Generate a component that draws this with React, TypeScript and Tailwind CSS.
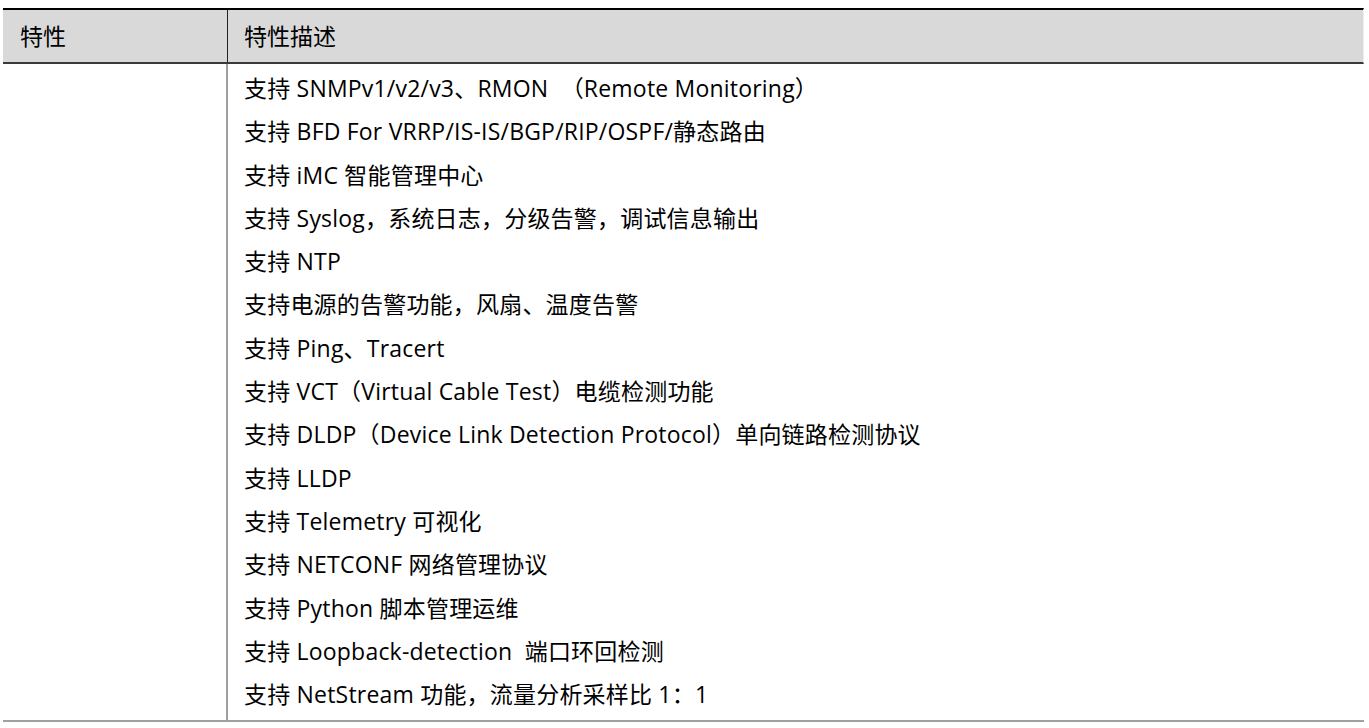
import React from "react";

const rows = [
  "支持 SNMPv1/v2/v3、RMON  （Remote Monitoring）",
  "支持 BFD For VRRP/IS-IS/BGP/RIP/OSPF/静态路由",
  "支持 iMC 智能管理中心",
  "支持 Syslog，系统日志，分级告警，调试信息输出",
  "支持 NTP",
  "支持电源的告警功能，风扇、温度告警",
  "支持 Ping、Tracert",
  "支持 VCT（Virtual Cable Test）电缆检测功能",
  "支持 DLDP（Device Link Detection Protocol）单向链路检测协议",
  "支持 LLDP",
  "支持 Telemetry 可视化",
  "支持 NETCONF 网络管理协议",
  "支持 Python 脚本管理运维",
  "支持 Loopback-detection  端口环回检测",
  "支持 NetStream 功能，流量分析采样比 1：1",
];

export default function App() {
  return (
    <div
      className="w-[1369px] h-[728px] bg-white overflow-hidden pt-[8px] pl-[3px] text-black"
      style={{ fontFamily: '"Open Sans", "Noto Sans CJK SC", sans-serif' }}
    >
      <div className="w-[1361px]">
        <div className="flex h-[56px] bg-[#d9d9d9] border-t-2 border-t-black border-b-2 border-b-[#3a3a3a] border-r border-r-[#eeeeee]">
          <div className="w-[225px] border-r border-r-[#222] flex items-center pl-[17px] text-[23px]">
            特性
          </div>
          <div className="flex-1 flex items-center pl-[16px] text-[23px]">特性描述</div>
        </div>
        <div className="flex border-b-2 border-b-[#a0a0a0]">
          <div className="w-[225px] border-r-2 border-r-[#a0a0a0]"></div>
          <div className="flex-1 pl-[16px] pt-[3px] pb-[4px]">
            {rows.map((r, i) => (
              <div key={i} className="h-[43.3px] leading-[43.3px] text-[23px] tracking-[0.2px] whitespace-pre">
                {r}
              </div>
            ))}
          </div>
        </div>
      </div>
    </div>
  );
}
